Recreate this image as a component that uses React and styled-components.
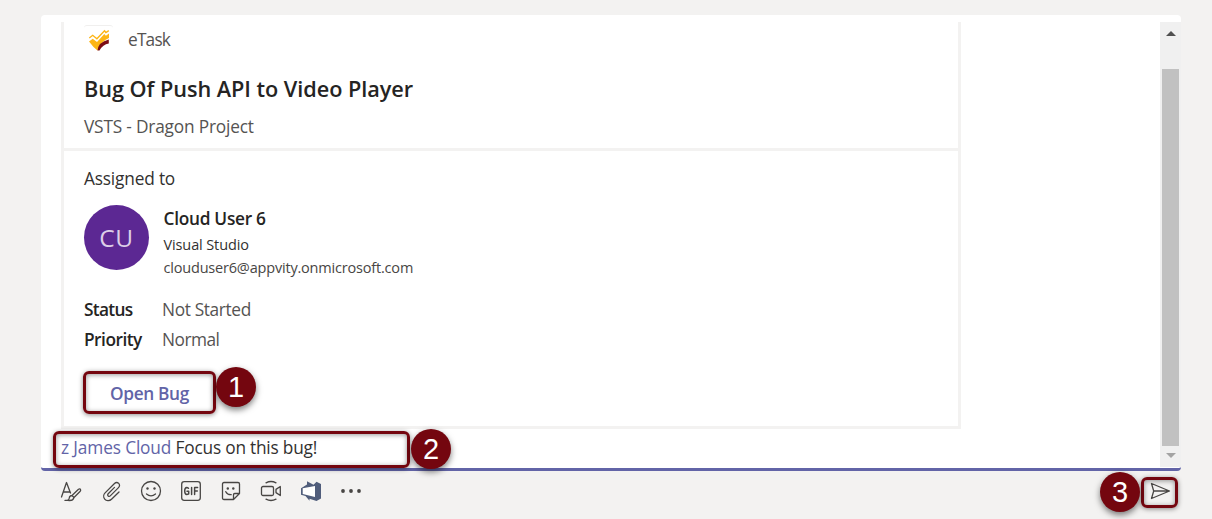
import React from "react";
import styled, { createGlobalStyle } from "styled-components";

const GlobalStyle = createGlobalStyle`
  * { box-sizing: border-box; }
  body {
    margin: 0;
    background: #f3f2f1;
    font-family: "Open Sans", "Noto Sans", sans-serif;
    color: #252423;
    overflow: hidden;
  }
`;

const Page = styled.main`
  position: relative;
  width: 1212px;
  height: 519px;
  padding: 15px 31px 0 41px;
  overflow: hidden;
`;

const Composer = styled.section`
  display: flex;
  height: 456px;
  padding-top: 7px;
  background: #fff;
  border-bottom: 3px solid #6264a7;
  border-radius: 4px;
`;

const Editor = styled.div`
  width: 1119px;
  padding-left: 20px;
`;

const Card = styled.article`
  width: 900px;
  height: 407px;
  border: 3px solid #f3f2f1;
  border-top: 0;
`;

const CardHead = styled.header`
  height: 129px;
  padding-left: 20px;
  border-bottom: 3px solid #f3f2f1;
`;

const CardBody = styled.div`
  padding: 16px 0 0 20px;
`;

const Text = styled.div`
  font-size: ${(p) => p.$size || 17.3}px;
  line-height: ${(p) => p.$line || 24}px;
  font-weight: ${(p) => p.$weight || 400};
  letter-spacing: ${(p) => p.$track || 0}px;
  color: ${(p) => p.$color || "#323130"};
  white-space: pre;
`;

const Subtitle = styled(Text)`
  margin-top: 11px;
`;

const AppRow = styled.div`
  display: flex;
  align-items: center;
  height: 34px;
  gap: 15px;
  padding-top: 2px;
  margin-bottom: 18px;
`;

const AppIcon = styled.div`
  width: 29px;
  height: 30px;
  border-top: 1px solid #f0efee;
  border-radius: 3px;
  svg { display: block; }
`;

const Person = styled.div`
  display: flex;
  gap: 14.5px;
  height: 72px;
  margin-top: 14px;
`;

const Avatar = styled.div`
  width: 65px;
  height: 65px;
  border-radius: 50%;
  background: #5c2893;
  color: #dccfe8;
  font-size: 24.5px;
  letter-spacing: 0.5px;
  line-height: 65px;
  text-align: center;
`;

const Facts = styled.dl`
  display: grid;
  grid-template-columns: 78px auto;
  grid-auto-rows: 30px;
  align-items: center;
  margin: 18px 0 17px;
`;

const Value = styled(Text)`
  margin: 0;
`;

const OpenButton = styled.button`
  display: flex;
  align-items: center;
  justify-content: center;
  width: 131px;
  height: 43px;
  padding: 0;
  border: 0;
  background: #fff;
  font-family: inherit;
`;

const Message = styled.div`
  display: flex;
  height: 38px;
  align-items: center;
`;

const Scrollbar = styled.div`
  display: flex;
  flex-direction: column;
  align-items: center;
  width: 21px;
  height: 445px;
  background: #f0f0f0;
  padding-top: 9px;
`;

const Thumb = styled.div`
  width: 17px;
  height: 377px;
  margin: 33px 0 7px;
  background: #c1c1c1;
`;

const Arrow = styled.div`
  width: 0;
  height: 0;
  border: 5px solid transparent;
  border-width: ${(p) => (p.$down ? "5px 5px 0" : "0 5px 5px")};
  border-top-color: ${(p) => (p.$down ? "#a3a3a3" : "transparent")};
  border-bottom-color: ${(p) => (p.$down ? "transparent" : "#505050")};
`;

const Toolbar = styled.footer`
  display: flex;
  align-items: center;
  height: 40px;
  padding: 0 9px 0 18px;
  gap: 16px;
`;

const Icon = styled.svg`
  width: 24px;
  height: 24px;
  flex: none;
  fill: none;
  stroke: #484644;
  stroke-width: 1.3;
  stroke-linecap: round;
  stroke-linejoin: round;
`;

const SendIcon = styled(Icon)`
  margin-left: auto;
`;

const Outline = styled.div`
  position: absolute;
  left: ${(p) => p.$x}px;
  top: ${(p) => p.$y}px;
  width: ${(p) => p.$w}px;
  height: ${(p) => p.$h}px;
  border: 3px solid #74060f;
  border-radius: 6px;
  box-shadow: 0 1px 5px rgba(0, 0, 0, 0.45), inset 0 1px 5px rgba(0, 0, 0, 0.4);
`;

const Badge = styled.div`
  position: absolute;
  left: ${(p) => p.$x}px;
  top: ${(p) => p.$y}px;
  width: 40px;
  height: 40px;
  border-radius: 50%;
  background: #74060f;
  color: #fff;
  font: 29px/41px "Liberation Sans", Arial, sans-serif;
  text-align: center;
  box-shadow: 0 3px 6px rgba(0, 0, 0, 0.5);
`;

const grey = "#484644";

export default function App() {
  return (
    <Page>
      <GlobalStyle />
      <Composer>
        <Editor>
          <Card>
            <CardHead>
              <AppRow>
                <AppIcon>
                  <svg width="29" height="29" viewBox="0 0 29 29">
                    <path d="M5 15.500l3.700-2.800 4.300 3.300L20.300 8l1.600 1.700L25 7.500V12q-7 2.500-11.500 12.500Q9 21 5 15.500z" fill="#fdb515" />
                    <path d="M5.300 12l3.400-2.700 4.200 3.400L20.500 4.700l1.400 1.800 2.900-1.800" fill="none" stroke="#fdb515" strokeWidth="1.400" />
                    <path d="M13.500 24.500q.8-8.500 11.300-11v4q-6 .8-9.300 7z" fill="#7b0c15" />
                  </svg>
                </AppIcon>
                <Text $color="#555352" $track={-0.8}>eTask</Text>
              </AppRow>
              <Text $size={21.7} $line={30} $weight={600} $track={-0.05} $color="#252423">Bug Of Push API to Video Player</Text>
              <Subtitle $color="#555352" $track={-0.19}>VSTS - Dragon Project</Subtitle>
            </CardHead>
            <CardBody>
              <Text $track={-0.18}>Assigned to</Text>
              <Person>
                <Avatar>CU</Avatar>
                <div>
                  <Text $weight={600} $line={27} $track={-0.28} $color="#252423">Cloud User 6</Text>
                  <Text $size={14.5} $line={25} $track={-0.12}>Visual Studio</Text>
                  <Text $size={14.5} $line={22} $track={-0.19} $color="#484644">clouduser6@appvity.onmicrosoft.com</Text>
                </div>
              </Person>
              <Facts>
                <Text as="dt" $weight={600} $track={-0.7} $color="#252423">Status</Text>
                <Value as="dd" $color="#555352" $track={-0.35}>Not Started</Value>
                <Text as="dt" $weight={600} $track={-0.5} $color="#252423">Priority</Text>
                <Value as="dd" $color="#555352" $track={-0.5}>Normal</Value>
              </Facts>
              <OpenButton>
                <Text as="span" $weight={600} $color="#6264a7" $track={-0.35}>Open Bug</Text>
              </OpenButton>
            </CardBody>
          </Card>
          <Message>
            <Text as="span" $color="#6264a7" $track={-0.14}>{"z James Cloud "}</Text>
            <Text as="span" $track={-0.22}>Focus on this bug!</Text>
          </Message>
        </Editor>
        <Scrollbar>
          <Arrow />
          <Thumb />
          <Arrow $down />
        </Scrollbar>
      </Composer>

      <Toolbar>
        <Icon viewBox="0 0 24 24">
          <path d="M2.500 18L7.500 3.500 11.500 14M4.200 13h6.300M6 21.400h6" />
          <path d="M13 16.500l6.500-6.300q1.500-.8 2 .3t-.5 2L15 18.500zM13 16.500q-2.500.3-2.700 2.500-.3 1.700-1.500 2.400 5.200.8 6.200-2.900z" />
        </Icon>
        <Icon viewBox="0 0 24 24">
          <path d="M20 13l-7.500 7.300c-2 2-5.300 1.600-6.800-.2s-1.200-4.600.4-6.200L15.500 4.500c1.300-1.300 3-1.300 4.200-.1s1.100 3-.2 4.200l-8 8c-1.700 1.700-3.800-.2-2.300-1.900l6.300-6.300" />
        </Icon>
        <Icon viewBox="0 0 24 24">
          <circle cx="12" cy="12" r="9.500" />
          <path d="M7.500 15q4.500 3.800 9 0" />
          <circle cx="8.500" cy="9.500" r="1.200" fill={grey} stroke="none" />
          <circle cx="15.500" cy="9.500" r="1.200" fill={grey} stroke="none" />
        </Icon>
        <Icon viewBox="0 0 24 24">
          <rect x="2.700" y="2.700" width="18.600" height="18.600" rx="2.500" />
          <path strokeWidth="1.500" d="M9.500 9.200Q8.700 8.500 7.700 8.500 5.700 8.700 5.700 12t2.100 3.500q1 0 1.900-.6v-2.700H8M12.600 8.500v7M15.600 15.500v-7h3M15.600 12h2.700" />
        </Icon>
        <Icon viewBox="0 0 24 24">
          <path d="M5 3.500h14q1.500 0 1.500 1.500v9.500L14.500 20.500H5q-1.500 0-1.500-1.500V5Q3.500 3.500 5 3.500zM14.500 20.500v-4.800q0-1.200 1.200-1.200h4.800" />
          <path d="M6.800 12.700q1.600 3.200 5.400 3" />
          <circle cx="8.800" cy="9.500" r="1.200" fill={grey} stroke="none" />
          <circle cx="14.300" cy="9.500" r="1.200" fill={grey} stroke="none" />
        </Icon>
        <Icon viewBox="0 0 24 24">
          <rect x="2.500" y="7.500" width="12" height="9" rx="1.500" />
          <path d="M21.300 7.500v9L17 13.600v-3.200zM7 3.800q5-2.600 10 0M7 20.200q5 2.600 10 0" />
        </Icon>
        <Icon viewBox="0 0 24 24">
          <path d="M2 9.300L8 5.500V2.300l6.500 3.500L17.500 2.700 22 5v14.500L17.500 22l-7-2.300v2L6.500 17 2 15.700z" fill="#505d7b" stroke="none" />
          <path d="M3.700 9.300L16 7v11L3.700 15z" fill="#fff" stroke="none" />
        </Icon>
        <Icon viewBox="0 0 24 24">
          {[4, 12, 20].map((x) => (
            <circle key={x} cx={x} cy="12" r="1.900" fill={grey} stroke="none" />
          ))}
        </Icon>
        <SendIcon viewBox="0 0 24 24">
          <path d="M3.500 4.500L21.500 12 3.500 19.500 5.700 12zM5.700 12h15.500" />
        </SendIcon>
      </Toolbar>

      <Outline $x={83} $y={371} $w={133} $h={43} />
      <Outline $x={53} $y={431} $w={357} $h={37} />
      <Outline $x={1141} $y={477} $w={37} $h={31} />
      <Badge $x={216} $y={367}>1</Badge>
      <Badge $x={411} $y={429}>2</Badge>
      <Badge $x={1100} $y={472}>3</Badge>
    </Page>
  );
}
